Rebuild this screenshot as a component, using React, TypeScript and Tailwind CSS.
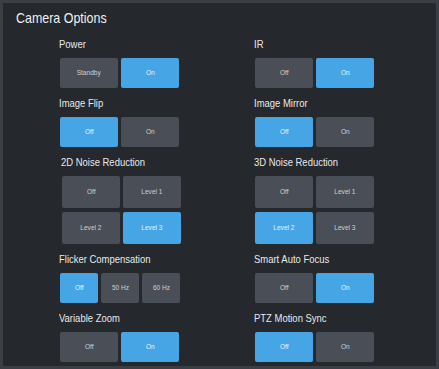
import React from 'react';

const font = { fontFamily: '"Liberation Sans", Arial, sans-serif' };

type Opt = { label: string; active?: boolean };

function Btn({ label, active, w = 'w-[58px]', h = 'h-[30px]' }: Opt & { w?: string; h?: string }) {
  return (
    <button
      className={
        (active ? 'bg-[#46a6e5] text-[#e4f2fc] ' : 'bg-[#4a4e57] text-[#cfd1d4] ') +
        w + ' ' + h + ' rounded-[2px] text-[8px] flex items-center justify-center'
      }
    >
      <span className="inline-block scale-x-[0.82]">{label}</span>
    </button>
  );
}

function Label({ children }: { children: React.ReactNode }) {
  return (
    <div className="h-[14px] leading-[14px] text-[11px] text-[#e8e9ea] mb-[7px] -ml-[1px]">
      <span className="inline-block origin-left scale-x-[0.86] whitespace-nowrap">{children}</span>
    </div>
  );
}

function Pair({ title, opts }: { title: string; opts: Opt[] }) {
  return (
    <div>
      <Label>{title}</Label>
      <div className="flex gap-[3px]">
        {opts.map((o) => (
          <Btn key={o.label} {...o} />
        ))}
      </div>
    </div>
  );
}

function Noise({ title, active, shift }: { title: string; active: string; shift?: boolean }) {
  const levels = ['Off', 'Level 1', 'Level 2', 'Level 3'];
  return (
    <div className={shift ? 'ml-[2px]' : ''}>
      <Label>{title}</Label>
      <div className="grid grid-cols-[58px_58px] gap-x-[3px] gap-y-[4px]">
        {levels.map((l) => (
          <Btn key={l} label={l} active={l === active} h="h-[32px]" />
        ))}
      </div>
    </div>
  );
}

export default function App() {
  return (
    <div style={font} className="w-[439px] h-[369px] bg-[#25282d] border-[3px] border-[#3b3e44] overflow-hidden">
      <div className="pl-[13px] pt-[6px] h-[18px] box-content leading-[18px] text-[15px] text-[#f0f1f2]">
        <span className="inline-block origin-left scale-x-[0.83] whitespace-nowrap">Camera Options</span>
      </div>
      <div className="pl-[57px] pt-[10px] grid grid-cols-[195px_195px] gap-y-[8px]">
        <Pair title="Power" opts={[{ label: 'Standby' }, { label: 'On', active: true }]} />
        <Pair title="IR" opts={[{ label: 'Off' }, { label: 'On', active: true }]} />
        <Pair title="Image Flip" opts={[{ label: 'Off', active: true }, { label: 'On' }]} />
        <Pair title="Image Mirror" opts={[{ label: 'Off', active: true }, { label: 'On' }]} />
        <Noise title="2D Noise Reduction" active="Level 3" shift />
        <Noise title="3D Noise Reduction" active="Level 2" />
        <div>
          <Label>Flicker Compensation</Label>
          <div className="flex gap-[3px]">
            <Btn label="Off" active w="w-[38px]" />
            <Btn label="50 Hz" w="w-[38px]" />
            <Btn label="60 Hz" w="w-[38px]" />
          </div>
        </div>
        <Pair title="Smart Auto Focus" opts={[{ label: 'Off' }, { label: 'On', active: true }]} />
        <Pair title="Variable Zoom" opts={[{ label: 'Off' }, { label: 'On', active: true }]} />
        <Pair title="PTZ Motion Sync" opts={[{ label: 'Off', active: true }, { label: 'On' }]} />
      </div>
    </div>
  );
}
